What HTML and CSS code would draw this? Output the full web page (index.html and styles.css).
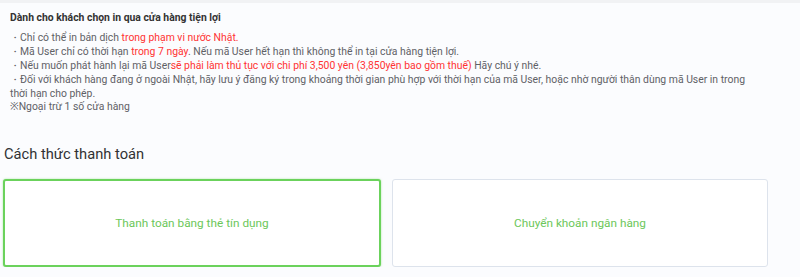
FILE: index.html
```html
<!DOCTYPE html>
<html>
	<head>
		<meta charset="utf-8" />
		<title>Cách thức thanh toán</title>
		<link rel="stylesheet" href="styles.css">
	</head>
	<body>
		<div class="topbar"></div>
		<div class="wrap">
			<div class="notice">
				<h3 class="notice-title">Dành cho khách chọn in qua cửa hàng tiện lợi</h3>
				<ul class="notice-list">
					<li>・Chỉ có thể in bản dịch <span class="red">trong phạm vi nước Nhật.</span></li>
					<li>・Mã User chỉ có thời hạn <span class="red">trong 7 ngày</span>. Nếu mã User hết hạn thì không thể in tại cửa hàng tiện lợi.</li>
					<li>・Nếu muốn phát hành lại mã User<span class="red">sẽ phải làm thủ tục với chi phí 3,500 yên (3,850yên bao gồm thuế)</span> Hãy chú ý nhé.</li>
					<li>・Đối với khách hàng đang ở ngoài Nhật, hãy lưu ý đăng ký trong khoảng thời gian phù hợp với thời hạn của mã User, hoặc nhờ người thân dùng mã User in trong thời hạn cho phép.</li>
				</ul>
				<p class="note">※Ngoại trừ 1 số cửa hàng</p>
			</div>

			<h2 class="pay-title">Cách thức thanh toán</h2>
			<div class="pay-list">
				<div class="pay-item active">Thanh toán bằng thẻ tín dụng</div>
				<div class="pay-item">Chuyển khoản ngân hàng</div>
			</div>
		</div>
	</body>
</html>
```

FILE: styles.css
```css
*{
	margin: 0;
	padding: 0;
}
body{
	background: #fbfcfe;
	color: #5f6166;
	font-family: Roboto, "Noto Sans", sans-serif;
}
.topbar{
	height: 3px;
	background: #f1f2f4;
}
.wrap{
	width: 768px;
}
.notice{
	padding: 8px 10px 0 10px;
	font-size: 10.4px;
	line-height: 14px;
}
.notice-title{
	font-size: 10.4px;
	font-weight: bold;
	color: #333;
	margin-bottom: 6px;
}
.notice-list li{
	list-style: none;
}
.red{
	color: #f33;
}
.note{
	line-height: 12px;
}
.pay-title{
	font-size: 14.7px;
	font-weight: normal;
	color: #303133;
	margin: 31px 0 0 4px;
	line-height: 20px;
}
.pay-list{
	display: flex;
	gap: 11px;
	padding: 15px 0 0 3px;
}
.pay-item{
	flex: 1;
	height: 88px;
	box-sizing: border-box;
	border: 1px solid #dde3ec;
	border-radius: 3px;
	background: #fff;
	display: flex;
	align-items: center;
	justify-content: center;
	font-size: 11.8px;
	color: #6cc75a;
}
.pay-item.active{
	border: 2px solid #6bd25c;
	box-shadow: 0 0 2px rgba(107, 210, 92, .6);
}
```
